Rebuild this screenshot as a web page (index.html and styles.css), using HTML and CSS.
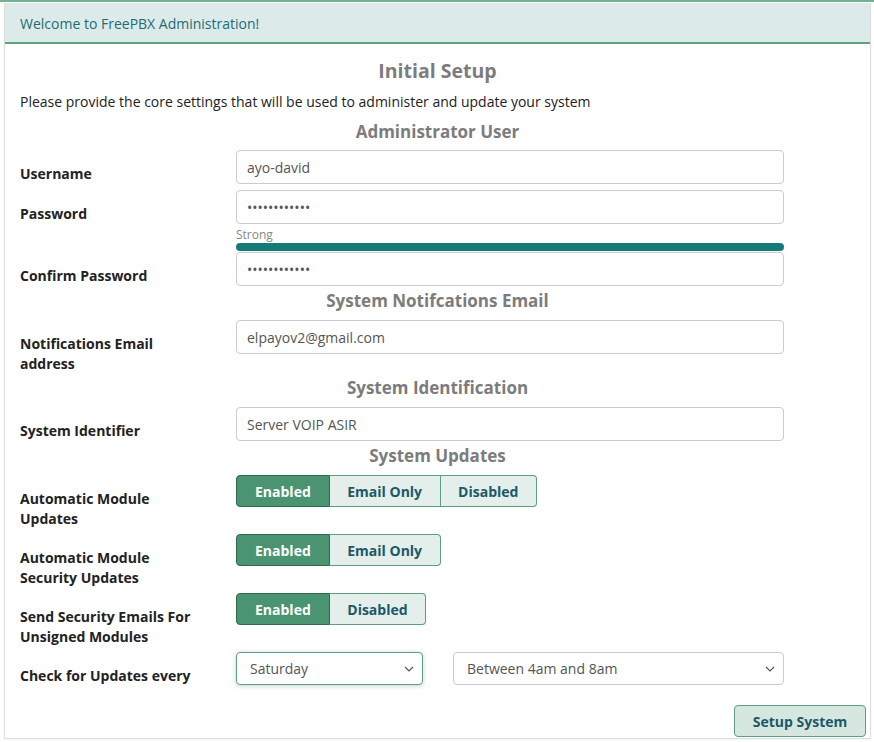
FILE: index.html
```html
<!DOCTYPE html>
<html>
<head>
<meta charset="utf-8">
<link rel="stylesheet" href="styles.css">
</head>
<body>
<div class="page">
  <div class="panel">
    <div class="panel-heading">Welcome to FreePBX Administration!</div>
    <div class="panel-body">
      <h2 class="title">Initial Setup</h2>
      <p class="intro">Please provide the core settings that will be used to administer and update your system</p>

      <h3 class="section section-first">Administrator User</h3>
      <div class="row">
        <label class="label">Username</label>
        <div class="field"><input class="input" type="text" value="ayo-david"></div>
      </div>
      <div class="row row-gap">
        <label class="label">Password</label>
        <div class="field">
          <input class="input" type="password" value="abcdefghijkl">
          <div class="strength">Strong</div>
          <div class="meter"></div>
        </div>
      </div>
      <div class="row row-tight">
        <label class="label">Confirm Password</label>
        <div class="field"><input class="input" type="password" value="abcdefghijkl"></div>
      </div>

      <h3 class="section">System Notifcations Email</h3>
      <div class="row">
        <label class="label">Notifications Email address</label>
        <div class="field"><input class="input" type="text" value="elpayov2@gmail.com"></div>
      </div>

      <h3 class="section">System Identification</h3>
      <div class="row">
        <label class="label">System Identifier</label>
        <div class="field"><input class="input" type="text" value="Server VOIP ASIR"></div>
      </div>

      <h3 class="section">System Updates</h3>
      <div class="row">
        <label class="label">Automatic Module Updates</label>
        <div class="field">
          <div class="btn-group">
            <span class="seg active">Enabled</span><span class="seg">Email Only</span><span class="seg">Disabled</span>
          </div>
        </div>
      </div>
      <div class="row row-gap">
        <label class="label">Automatic Module Security Updates</label>
        <div class="field">
          <div class="btn-group">
            <span class="seg active">Enabled</span><span class="seg">Email Only</span>
          </div>
        </div>
      </div>
      <div class="row row-gap">
        <label class="label">Send Security Emails For Unsigned Modules</label>
        <div class="field">
          <div class="btn-group">
            <span class="seg active">Enabled</span><span class="seg">Disabled</span>
          </div>
        </div>
      </div>
      <div class="row row-gap">
        <label class="label">Check for Updates every</label>
        <div class="field selects">
          <div class="select select-day focus"><span>Saturday</span><svg width="10" height="6" viewBox="0 0 10 6"><path d="M1 1 L5 5 L9 1" fill="none" stroke="#555" stroke-width="1.2"/></svg></div>
          <div class="select select-time"><span>Between 4am and 8am</span><svg width="10" height="6" viewBox="0 0 10 6"><path d="M1 1 L5 5 L9 1" fill="none" stroke="#555" stroke-width="1.2"/></svg></div>
        </div>
      </div>
    </div>
    <div class="panel-footer">
      <button class="btn-setup">Setup System</button>
    </div>
  </div>
</div>
</body>
</html>
```

FILE: styles.css
```css
* { box-sizing: border-box; }
html, body { margin: 0; padding: 0; background: #fff; }
body {
  font-family: "Open Sans", "Noto Sans", sans-serif;
  font-size: 14px;
  color: #222;
}
.page {
  border-top: 2px solid #74b095;
  padding: 1px 3px 0 4px;
  height: 742px;
}
.panel {
  border: 1px solid #ddd;
  border-top: 0;
  width: 867px;
  height: 736px;
  box-shadow: 0 1px 2px rgba(0,0,0,0.05);
}
.panel-heading {
  background: #dcebe9;
  border-bottom: 2px solid #5da27f;
  height: 41px;
  line-height: 39px;
  padding: 1px 0 0 15px;
  color: #226b74;
  font-size: 14px;
}
.panel-body {
  padding: 0 15px;
}
.title {
  margin: 13px 0 0;
  text-align: center;
  font-size: 19.5px;
  line-height: 28px;
  font-weight: 700;
  color: #7c7c7c;
}
.intro {
  margin: 7px 0 0;
  line-height: 20px;
  font-size: 14px;
  color: #222;
}
.section {
  margin: 4px 0 8px;
  text-align: center;
  font-size: 17px;
  line-height: 22px;
  font-weight: 700;
  color: #7c7c7c;
}
.section-first { margin-top: 9px; margin-bottom: 7px; }
.row {
  display: grid;
  grid-template-columns: 186px 548px;
  column-gap: 30px;
  align-items: start;
}
.row-gap { margin-top: 6px; }
.row-tight { margin-top: 1px; }
.label {
  padding-top: 14px;
  margin-bottom: -1px;
  font-weight: 700;
  line-height: 20px;
  color: #222;
}
.input {
  display: block;
  width: 100%;
  height: 34px;
  border: 1px solid #ccc;
  border-radius: 4px;
  padding: 0 10px;
  font-family: "Open Sans", "Noto Sans", sans-serif;
  font-size: 14px;
  color: #555;
  background: #fff;
  outline: none;
}
.strength {
  margin-top: 3px;
  font-size: 12px;
  line-height: 16px;
  color: #888;
}
.meter {
  height: 8px;
  border-radius: 4px;
  background: #167a78;
}
.btn-group {
  display: inline-flex;
  height: 32px;
}
.seg {
  display: flex;
  align-items: center;
  padding: 0 17.5px;
  font-weight: 700;
  font-size: 14px;
  color: #1c5868;
  background: #e4eeeb;
  border: 1px solid #5b9e80;
  border-left: 0;
}
.seg:first-child {
  border-left: 1px solid #5b9e80;
  border-radius: 4px 0 0 4px;
}
.seg:last-child {
  border-radius: 0 4px 4px 0;
}
.seg.active {
  background: #4a9471;
  color: #fff;
  border-color: #2e6a4e;
  padding: 0 18px;
}
.selects {
  display: flex;
  gap: 30px;
}
.select {
  display: flex;
  align-items: center;
  justify-content: space-between;
  height: 33px;
  border: 1px solid #ccc;
  border-radius: 4px;
  padding: 0 8px 0 13px;
  color: #555;
  background: #fff;
}
.select-day { width: 187px; }
.select-time { width: 331px; }
.select.focus {
  border-color: #5b9e80;
  box-shadow: 0 1px 5px rgba(0,0,0,0.2);
}
.panel-footer {
  display: flex;
  justify-content: flex-end;
  padding: 20px 4px 0 0;
}
.btn-setup {
  width: 132px;
  height: 32px;
  border: 1px solid #5b9e80;
  border-radius: 4px;
  background: #d6e7e0;
  color: #1c5868;
  font-family: "Open Sans", "Noto Sans", sans-serif;
  font-weight: 700;
  font-size: 14px;
  padding: 0;
}
```
